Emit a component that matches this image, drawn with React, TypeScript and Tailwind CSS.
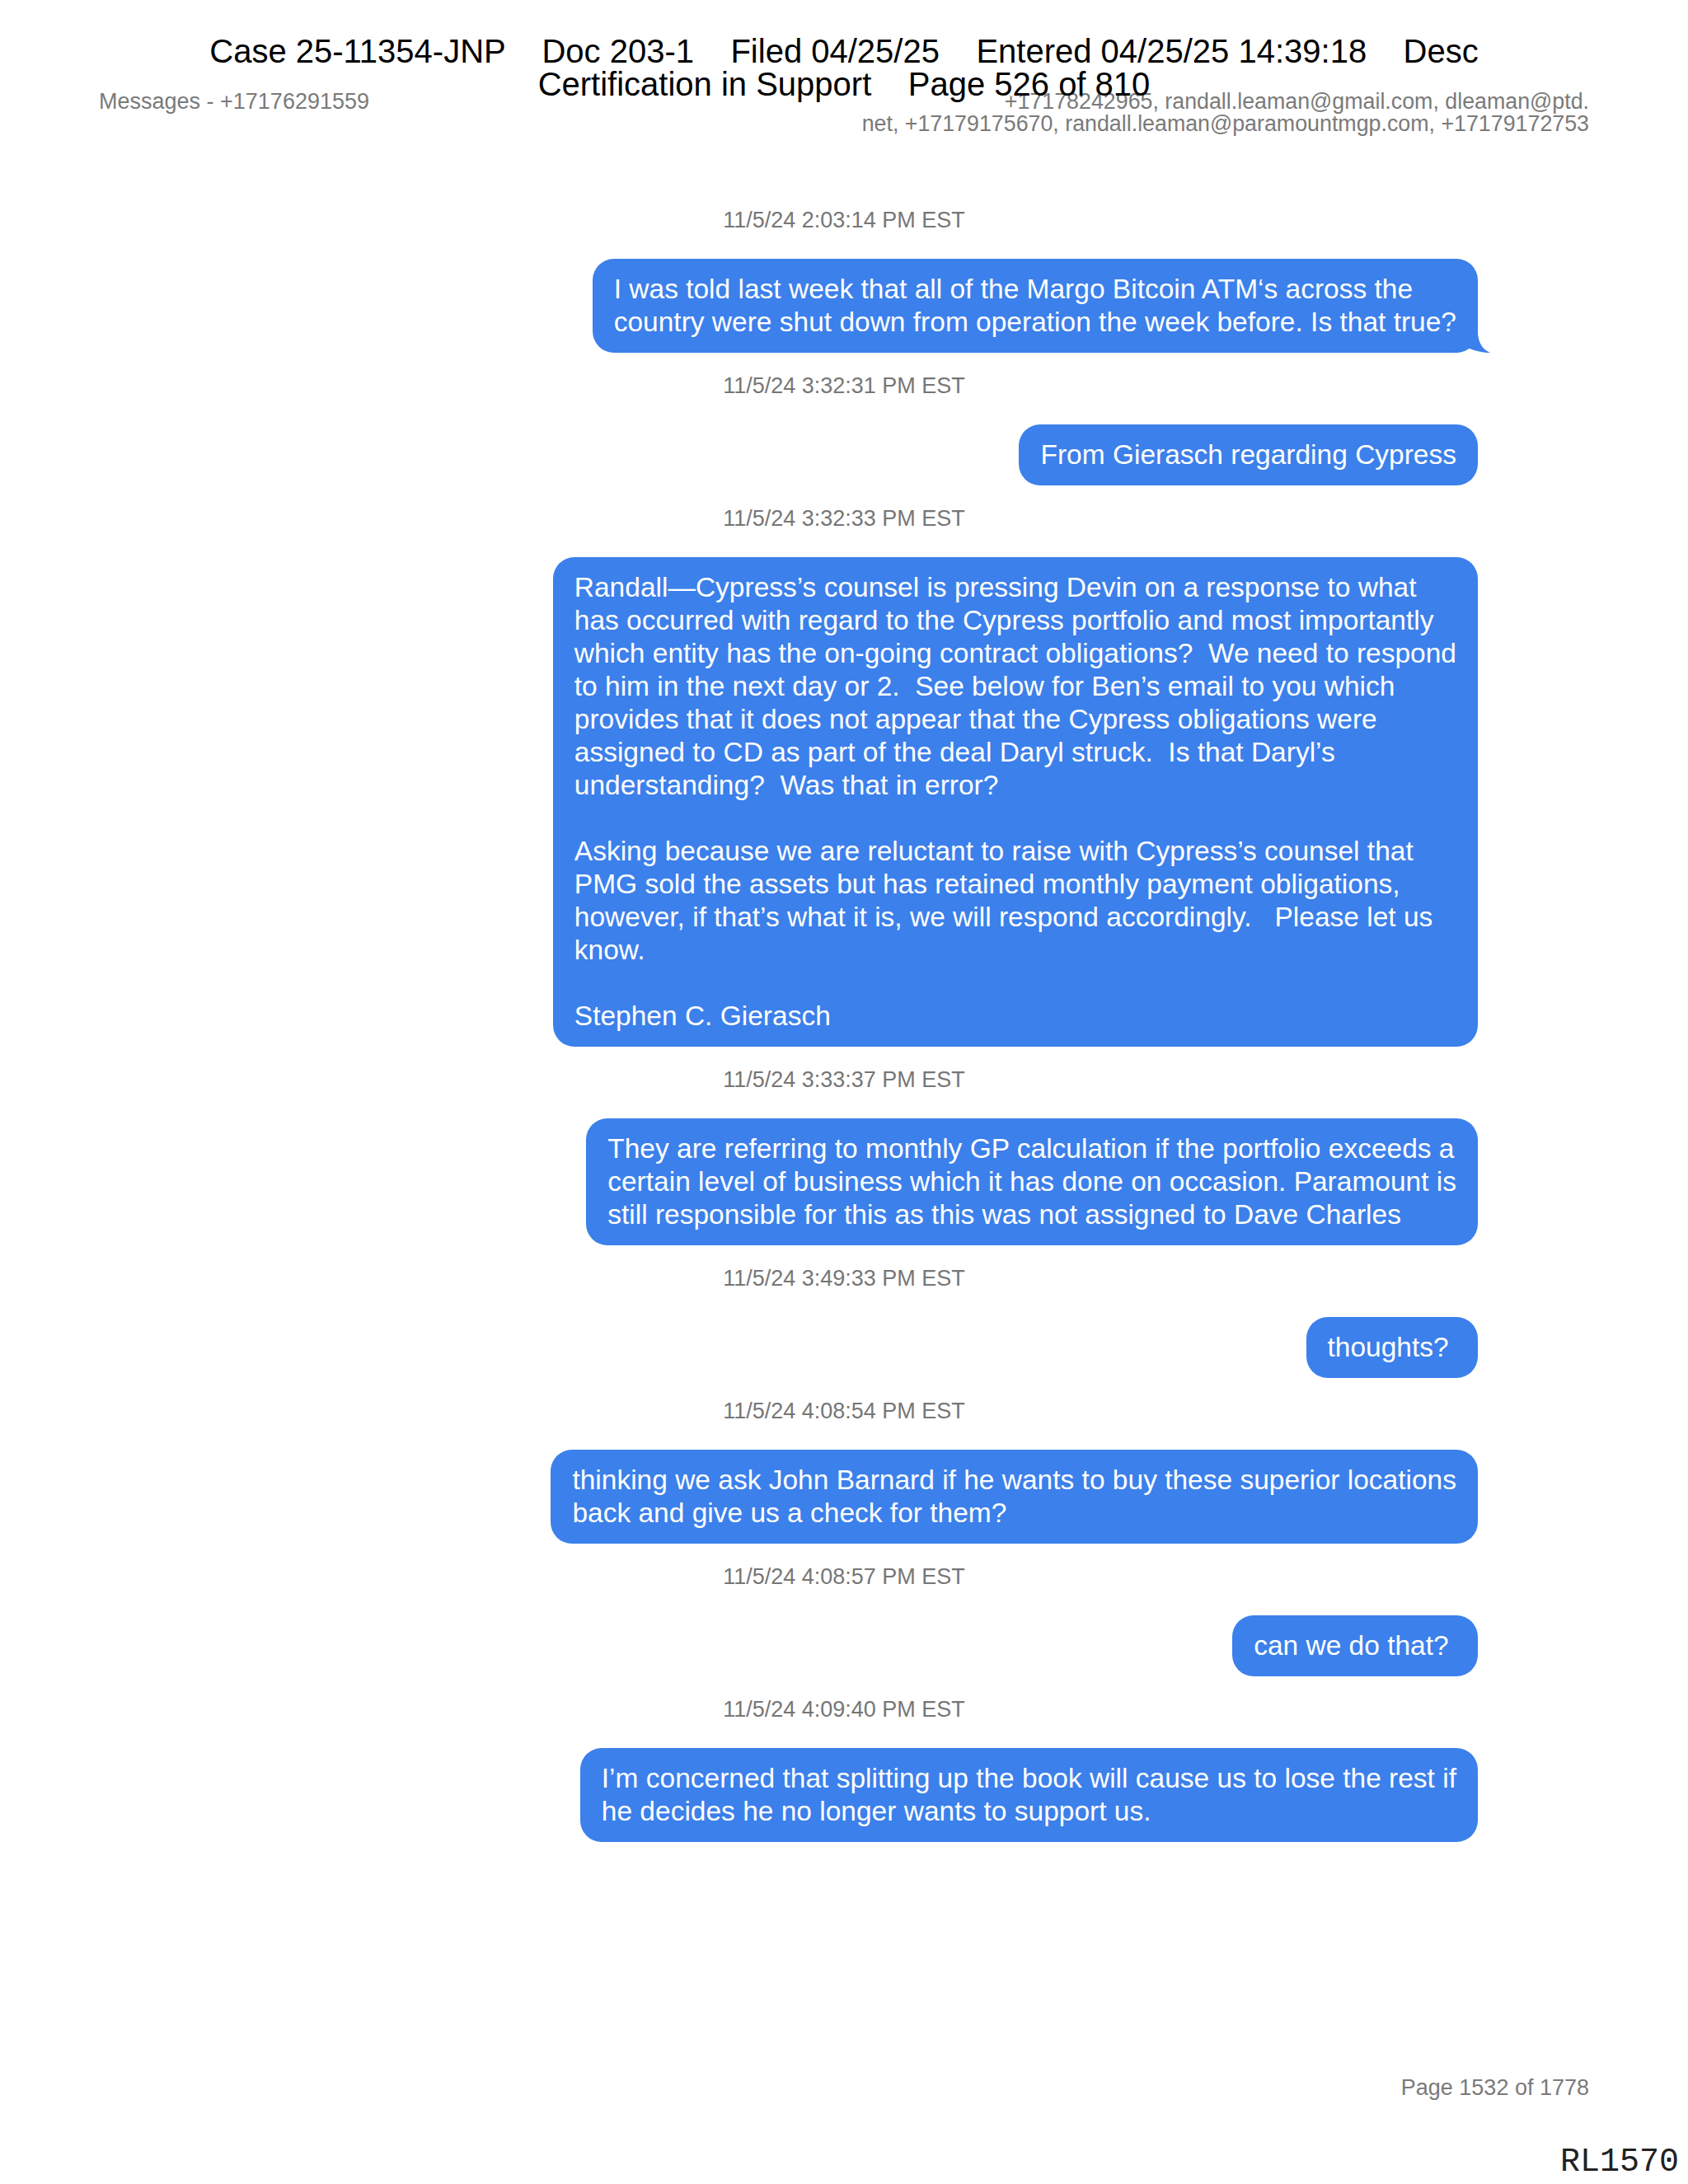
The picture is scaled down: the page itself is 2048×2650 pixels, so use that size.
import React from "react";

type Message = {
  time: string;
  text: string;
  tail?: boolean;
};

const messages: Message[] = [
  {
    time: "11/5/24 2:03:14 PM EST",
    text: "I was told last week that all of the Margo Bitcoin ATM\u2018s across the\ncountry were shut down from operation the week before. Is that true?",
    tail: true,
  },
  {
    time: "11/5/24 3:32:31 PM EST",
    text: "From Gierasch regarding Cypress",
  },
  {
    time: "11/5/24 3:32:33 PM EST",
    text: [
      "Randall\u2014Cypress\u2019s counsel is pressing Devin on a response to what",
      "has occurred with regard to the Cypress portfolio and most importantly",
      "which entity has the on-going contract obligations?  We need to respond",
      "to him in the next day or 2.  See below for Ben\u2019s email to you which",
      "provides that it does not appear that the Cypress obligations were",
      "assigned to CD as part of the deal Daryl struck.  Is that Daryl\u2019s",
      "understanding?  Was that in error?",
      "",
      "Asking because we are reluctant to raise with Cypress\u2019s counsel that",
      "PMG sold the assets but has retained monthly payment obligations,",
      "however, if that\u2019s what it is, we will respond accordingly.   Please let us",
      "know.",
      "",
      "Stephen C. Gierasch",
    ].join("\n"),
  },
  {
    time: "11/5/24 3:33:37 PM EST",
    text: [
      "They are referring to monthly GP calculation if the portfolio exceeds a",
      "certain level of business which it has done on occasion. Paramount is",
      "still responsible for this as this was not assigned to Dave Charles",
    ].join("\n"),
  },
  {
    time: "11/5/24 3:49:33 PM EST",
    text: "thoughts? ",
  },
  {
    time: "11/5/24 4:08:54 PM EST",
    text: "thinking we ask John Barnard if he wants to buy these superior locations\nback and give us a check for them?",
  },
  {
    time: "11/5/24 4:08:57 PM EST",
    text: "can we do that? ",
  },
  {
    time: "11/5/24 4:09:40 PM EST",
    text: "I\u2019m concerned that splitting up the book will cause us to lose the rest if\nhe decides he no longer wants to support us.",
  },
];

function Tail() {
  return (
    <svg
      className="absolute -right-[15px] bottom-0 h-[38px] w-[48px]"
      viewBox="0 0 48 38"
    >
      <path
        d="M33 0 L33 12 C33 26 39 34 48 38 C40 38 30 36 21 32 C16 36 10 38 0 38 L0 0 Z"
        fill="#3c80eb"
      />
    </svg>
  );
}

function MessageBlock({ message }: { message: Message }) {
  return (
    <div className="mt-[25px] flex flex-col first:mt-0">
      {/* Timestamp, centred on the page */}
      <div className="mb-[32px] text-center text-[27px] leading-[30px] text-[#767676]">
        {message.time}
      </div>
      <div className="flex justify-end pr-[255px]">
        <div className="relative w-fit whitespace-pre rounded-[26px] bg-[#3c80eb] px-[26px] py-[17px] text-[33.5px] leading-[40px] text-white">
          {message.text}
          {message.tail && <Tail />}
        </div>
      </div>
    </div>
  );
}

export default function App() {
  return (
    <div className="relative flex h-[2650px] w-[2048px] flex-col bg-white font-['Liberation_Sans',Arial,sans-serif]">
      {/* Court filing stamp laid over the page */}
      <div className="absolute inset-x-0 top-[42px] whitespace-pre text-center text-[40px] leading-[40px] text-black">
        <div>{"Case 25-11354-JNP    Doc 203-1    Filed 04/25/25    Entered 04/25/25 14:39:18    Desc"}</div>
        <div>{"Certification in Support    Page 526 of 810"}</div>
      </div>

      {/* Export header */}
      <div className="flex items-start justify-between px-[120px] pt-[110px] text-[27px] leading-[27px] text-[#7a7a7a]">
        <div>Messages - +17176291559</div>
        <div className="text-right text-[26.8px]">
          +17178242965, randall.leaman@gmail.com, dleaman@ptd.
          <br />
          net, +17179175670, randall.leaman@paramountmgp.com, +17179172753
        </div>
      </div>

      {/* Conversation */}
      <div className="mt-[88px] flex flex-col">
        {messages.map((m) => (
          <MessageBlock key={m.time} message={m} />
        ))}
      </div>

      <div className="flex-1" />

      {/* Footer */}
      <div className="px-[120px] text-right text-[27px] leading-[27px] text-[#7a7a7a]">
        Page 1532 of 1778
      </div>
      <div className="mt-[57px] pb-[6px] pr-[11px] text-right font-['Liberation_Mono','Courier_New',monospace] text-[40px] leading-[40px] text-[#222]">
        RL1570
      </div>
    </div>
  );
}
